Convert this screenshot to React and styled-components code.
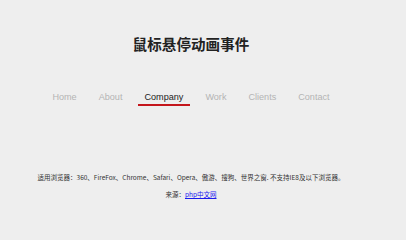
import React from 'react'
import styled, { createGlobalStyle } from 'styled-components'

const GlobalStyle = createGlobalStyle`
body {
  margin: 0;
  background: #eeeeee;
  font-family: "Liberation Sans", Arial, "Noto Sans CJK SC", sans-serif;
}
`

const items = ['Home', 'About', 'Company', 'Work', 'Clients', 'Contact']

function App () {
    return (
        <>
        <GlobalStyle />
        <Page>
            <Title>鼠标悬停动画事件</Title>
            <Menu>
                {items.map(name => (
                    <MenuItem key={name} active={name === 'Company'}>{name}</MenuItem>
                ))}
            </Menu>
            <Info>
                <Line>适用浏览器：360、FireFox、Chrome、Safari、Opera、傲游、搜狗、世界之窗. 不支持IE8及以下浏览器。</Line>
                <Line>来源：<Link href="#">php中文网</Link></Line>
            </Info>
        </Page>
        </>
    )
}

const Page = styled.div`
width: 382px;
padding-top: 34px;
text-align: center;
`

const Title = styled.h1`
margin: 0;
font-family: "Noto Sans CJK SC", serif;
font-size: 14.5px;
line-height: 20px;
font-weight: bold;
color: #222;
letter-spacing: 0.1px;
`

const Menu = styled.ul`
display: flex;
justify-content: center;
gap: 9px;
list-style: none;
margin: 37px 0 0;
padding: 0;
`

const MenuItem = styled.li`
padding: 0 6.5px 1px;
font-size: 9.1px;
line-height: 12px;
color: ${p => p.active ? '#222' : '#b4b4b4'};
border-bottom: 2px solid ${p => p.active ? '#c4161c' : 'transparent'};
`

const Info = styled.div`
margin-top: 67px;
font-family: "Noto Sans CJK SC", sans-serif;
font-size: 6.5px;
color: #333;
`

const Line = styled.p`
margin: 0 0 8px;
line-height: 9px;
`

const Link = styled.a`
color: #1a1aee;
text-decoration: underline;
`

export default App
